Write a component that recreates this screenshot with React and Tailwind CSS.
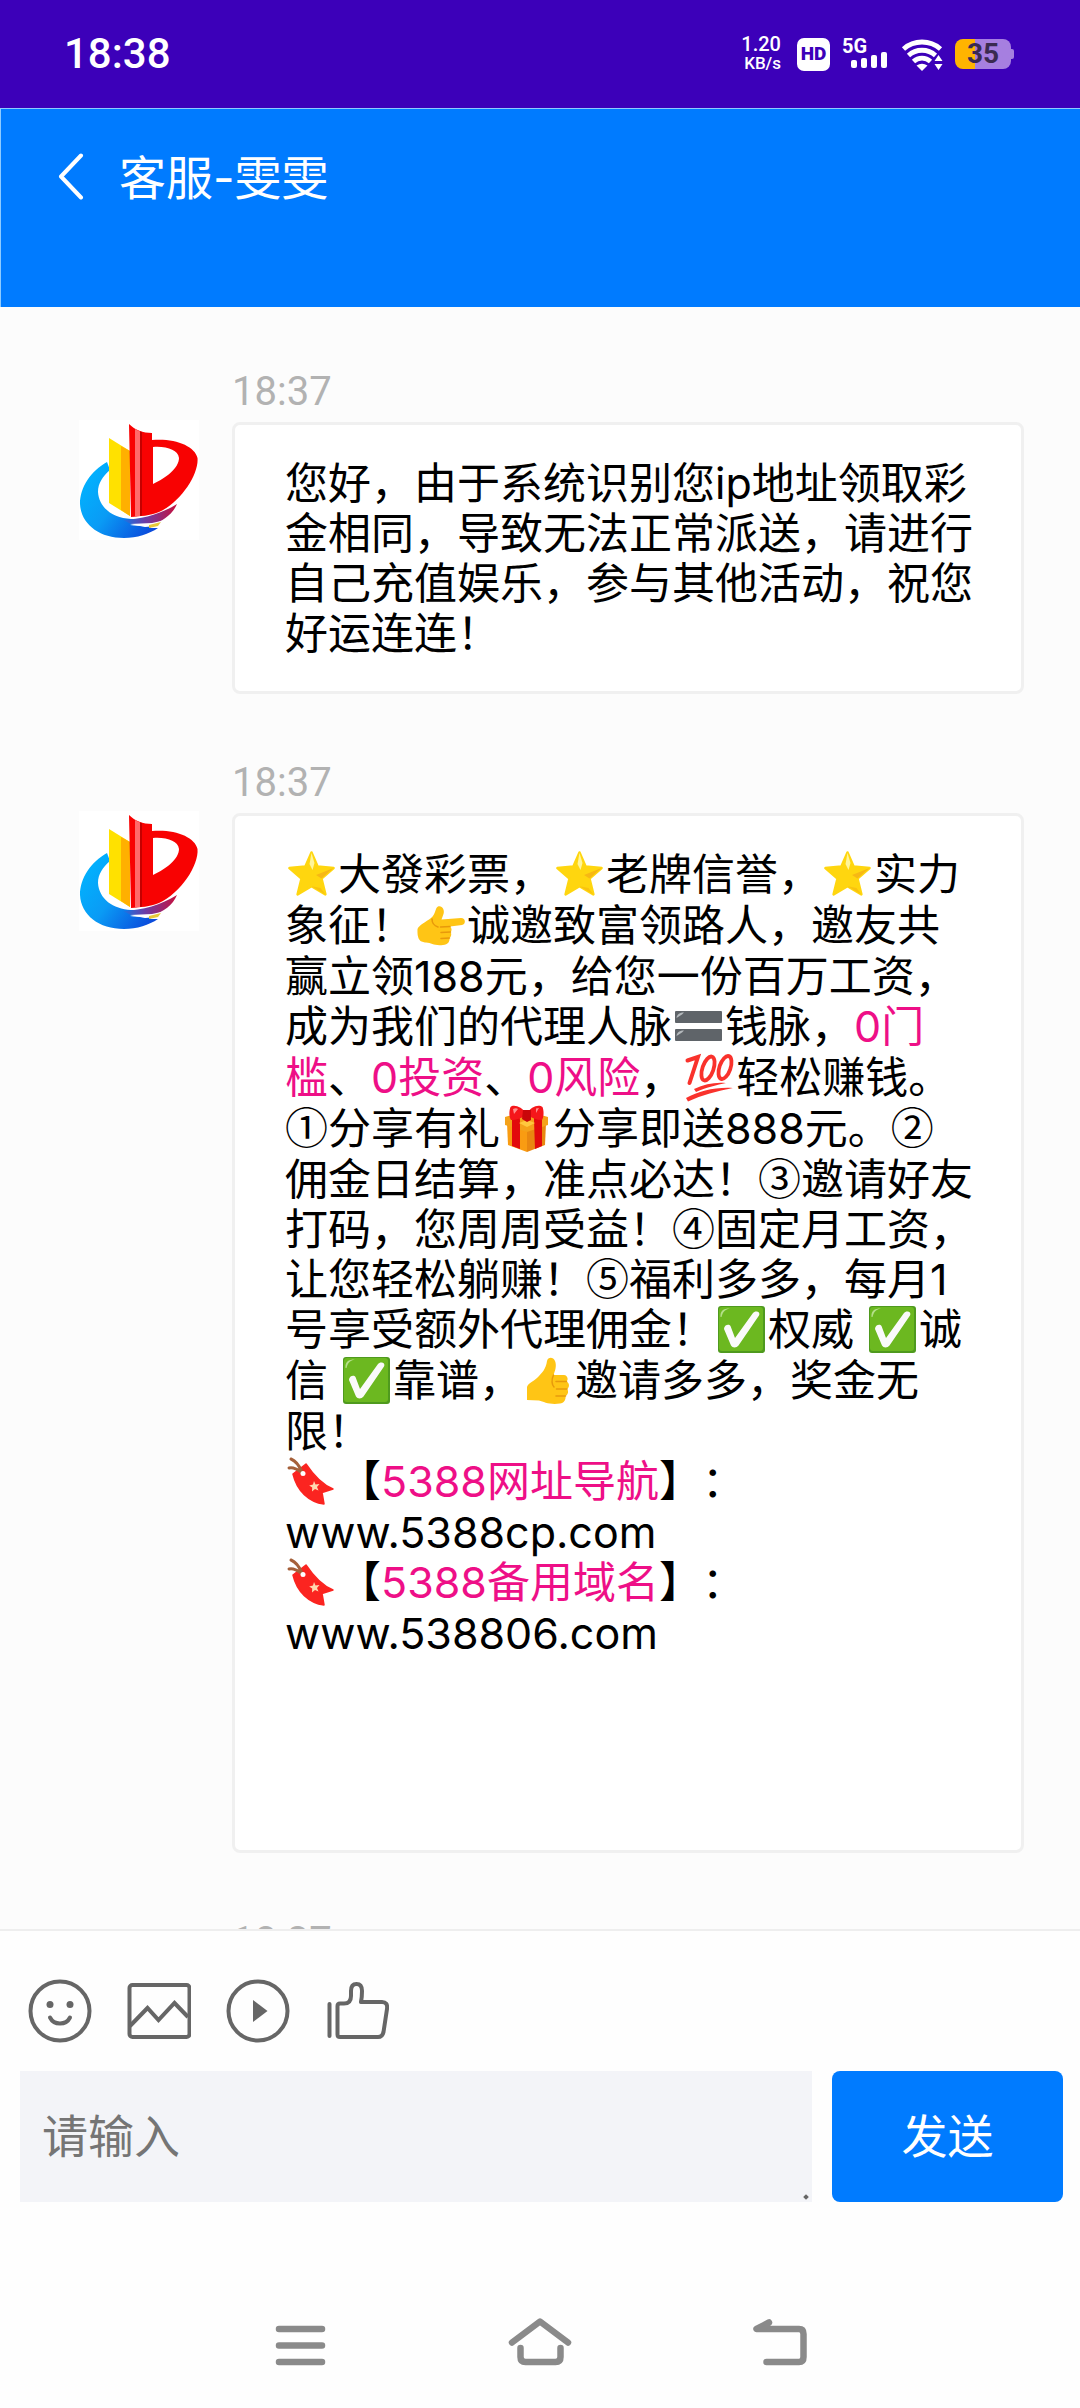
function Glyph({ label, children }) {
  return (
    <svg
      role="img"
      aria-label={label}
      viewBox="0 0 53 51"
      className="inline-block h-[51px] w-[53px] align-[-10px]"
    >
      {children}
    </svg>
  )
}

function Star() {
  return (
    <Glyph label="星">
      <path
        d="M26.5 3.5 32.6 17.6 48.6 19 36.5 29.6 40.4 45.4 26.5 37.2 12.6 45.4 16.5 29.6 4.4 19 20.4 17.6Z"
        fill="#ffd60f"
        stroke="#ffd60f"
        strokeWidth="2.5"
        strokeLinejoin="round"
      />
      <path d="M26.5 4 29.5 14 27.5 21 24.5 15Z" fill="#fff59a" />
      <path d="M48.5 19 36.5 29.6 31 26Z" fill="#f7b814" />
      <path d="M40.4 45.4 26.5 37.2 35.5 39Z" fill="#f9c20f" />
    </Glyph>
  )
}

function PointRight() {
  return (
    <Glyph label="指向">
      <path
        d="M3.5 29C5 25 12 22 17 18 22 14 21 8 24 6.5 28 5 31 10 29.5 14L27.5 19.5 47 18C52 18 52 24.5 48 25L36 26.5C38 28 38 31 36.5 32 38 34 37 37 35.5 38 36 41 34 45 29 45 20 46 18 43 12 42.5 7 42 3 41 3.5 29Z"
        fill="#ffc515"
      />
      <path d="M36 26.5 26.5 27M36.5 32 27 32.5M35.5 38 27 38.5M18 19C18 24 21 26 24 27" fill="none" stroke="#e8990b" strokeWidth="1.5" strokeLinecap="round" />
    </Glyph>
  )
}

function Equals() {
  return (
    <Glyph label="等于">
      <rect x="3" y="10" width="47" height="12" rx="1" fill="#5f6469" />
      <rect x="3" y="28" width="47" height="12" rx="1" fill="#5f6469" />
      <path d="M4.5 17C5 13 8 11.5 12 11.5L10 13.5ZM4.5 35C5 31 8 29.5 12 29.5L10 31.5Z" fill="#b5babd" />
    </Glyph>
  )
}

function Hundred() {
  return (
    <Glyph label="满分">
      <g fill="none" stroke="#f9322c" strokeLinecap="round">
        <path d="M4.5 8.5 15 5 6.5 31" strokeWidth="4" />
        <ellipse cx="25" cy="16.5" rx="5.5" ry="12.5" transform="rotate(19 25 16.5)" strokeWidth="3.8" />
        <ellipse cx="42" cy="15.5" rx="5.5" ry="12" transform="rotate(19 42 15.5)" strokeWidth="3.8" />
      </g>
      <path d="M11 37C22 32 32 30 43 31 34 33 24 35 13 40ZM3 46C16 39 32 35 50 36 34 39 19 43 5 49.5Z" fill="#f9322c" />
    </Glyph>
  )
}

function Gift() {
  return (
    <Glyph label="礼物">
      <path d="M7 20 27 26 27 49 8 42Z" fill="#f99c12" />
      <path d="M27 26 46 20 45 42 27 49Z" fill="#e98710" />
      <path d="M5 14 26.5 8 48 14 48 22 27 29 5 22Z" fill="#f4a21a" />
      <path d="M12 12 19 10 20 17 20 46 12 43ZM34 10 42 12 42 43 35 46 34 17Z" fill="#e20a0c" />
      <path d="M19 20 27 17 35 20 27 24Z" fill="#ffc83e" />
      <path
        d="M26.5 11C22 3 13 1 10.5 4 9 8 9 14 11 17 16 17 23 15 26.5 11ZM26.5 11C31 3 39 1 42.5 4 44 8 44 14 42 17 37 17 31 15 26.5 11Z"
        fill="#f5161a"
      />
      <path d="M23 7H31V17L27 19 22 16Z" fill="#c9060a" />
      <path d="M13 6C15 5 17 5 18 6L14 11ZM36 5.5 39 5 36 10Z" fill="#ff8f8c" />
    </Glyph>
  )
}

function Check() {
  return (
    <Glyph label="对勾">
      <rect x="3" y="2" width="47" height="47" rx="3" fill="#4f9a1e" />
      <rect x="4" y="3" width="44" height="44" rx="3" fill="#6cb820" />
      <path d="M5.5 13C5 7 8 4.5 15 4.5 9 6 8 8 6.5 13Z" fill="#b5e08a" />
      <path d="M9 25C9 21 14 19.5 15.5 22L20 34 38 9C40 6 46 7.5 44 11.5L23.5 41.5C21.5 44 17.5 44 16 41.5Z" fill="#fafafa" />
    </Glyph>
  )
}

function ThumbUp() {
  return (
    <Glyph label="点赞">
      <path
        d="M5 32C6 28 11 27 15 23 20 18 24 14 25 6 26 2 31 1.5 33 6 35 11 33 16 31.5 20L42 20C46 20.5 46.5 25 44.5 26.5 48 28 47.5 33 45 34 47 36 46 40 43.5 41 44 45 42 48 38 48.5 28 50 22 47 17 45.5L5 45Z"
        fill="#ffc515"
      />
      <path d="M44.5 26.5H34M45 34H34.5M43.5 41H34M31.5 20C29 25 30 30 32 32" fill="none" stroke="#e79a0c" strokeWidth="1.5" strokeLinecap="round" />
    </Glyph>
  )
}

function Tag() {
  return (
    <Glyph label="书签">
      <path d="M8 18 21 8C27 17 35 28 48 33L37 36.5 39 48C24 46 12 35 8 18Z" fill="#fb2420" stroke="#fb2420" strokeWidth="1.5" strokeLinejoin="round" />
      <path d="M6 3C11 5 14 9 17 16M4 12C8 11 12 13 16 16" fill="none" stroke="#a5603a" strokeWidth="3" strokeLinecap="round" />
      <circle cx="18" cy="17.5" r="2.5" fill="#fff" />
      <path d="m29 25 1.5 3.5 4-.5-2.5 3 1.5 3.5-3.5-1.5-3 2.5.2-4-3-2 3.8-1Z" fill="#ffd9b0" />
    </Glyph>
  )
}

function Logo() {
  return (
    <svg role="img" aria-label="大發彩票" viewBox="0 0 120 120" className="mt-[58px] size-[120px] shrink-0 bg-white">
      <defs>
        <linearGradient id="swoosh" x1="0" y1="0.2" x2="1" y2="0.9">
          <stop offset="0" stopColor="#00b4ff" />
          <stop offset="0.45" stopColor="#0a9bf5" />
          <stop offset="1" stopColor="#0b3fd8" />
        </linearGradient>
        <linearGradient id="tail" x1="0" x2="1">
          <stop offset="0" stopColor="#1676e6" />
          <stop offset="0.4" stopColor="#6a3ea8" />
          <stop offset="1" stopColor="#c8103c" />
        </linearGradient>
      </defs>
      <path
        d="M28 42C12 51 1 67 1 84 2 104 20 118 45 118 58 118 70 114 79 108L70 108 77 105C68 107 60 106 51 105L82 101 70 99 52 99C34 98 20 88 19 72 19 63 24 56 31 50Z"
        fill="url(#swoosh)"
      />
      <path d="M44 100C64 99 82 94 98 84 94 94 84 101 74 104L52 104Z" fill="url(#tail)" />
      <path d="M51 104 73 103 82 101 78 106 66 107Z" fill="#fff" />
      <path d="M70 105 82 102 79 106 70 108Z" fill="#e8c93a" />
      <path d="M30 18 51 31 51 96 30 83Z" fill="#ffe100" />
      <path d="M42 26 51 31 51 96 42 90Z" fill="#ffb000" />
      <path
        fillRule="evenodd"
        d="M50 4C56 10 64 13 73 13V20C96 18 116 26 118.5 38 120 54 102 82 80 92 71 96 61 96 52 97ZM74 27V64C87 58 100 48 100 38 99 30 88 26 74 27Z"
        fill="#f80202"
      />
      <path d="M56 9 61 11.5V96L56 96.5Z" fill="#ff6a6a" />
      <path d="M61 11.5 63 12V95.5L61 96Z" fill="#c40000" />
    </svg>
  )
}

function Message({ time, tall, children }) {
  return (
    <article className="flex items-start gap-[33px]">
      <Logo />
      <div className="min-w-0 flex-1">
        <time className="block font-['Roboto','Noto_Sans_CJK_SC',sans-serif] text-[40px] leading-[60px] text-[#b2b2b2]">
          {time}
        </time>
        <div
          className={`rounded-lg border-[3px] border-[#f0f0f0] bg-white pt-[33px] pr-[45px] pl-[50px] text-[43px] leading-[50px] text-black [text-spacing-trim:space-all] ${tall ? 'pb-[192px]' : 'pb-[33px]'}`}
        >
          {children}
        </div>
      </div>
    </article>
  )
}

function Pink({ children }) {
  return <span className="text-[#ee0f87]">{children}</span>
}

function Num({ children }) {
  return <span className="font-['Noto_Sans_CJK_SC',sans-serif] leading-none">{children}</span>
}

function StatusBar() {
  return (
    <div className="flex h-[108px] shrink-0 items-center justify-between bg-[#3c00b9] pr-[66px] pl-[64px] font-['Roboto','Noto_Sans_CJK_SC',sans-serif] text-white">
      <span className="text-[42px] leading-none font-medium">18:38</span>
      <div className="flex items-center">
        <div className="mr-4 text-right font-medium">
          <p className="text-[20px] leading-[19px]">1.20</p>
          <p className="text-[17px] leading-[19px]">KB/s</p>
        </div>
        <span className="mr-3 flex size-[33px] items-center justify-center rounded-[7px] bg-white text-[19px] font-black text-[#3c00b9]">
          HD
        </span>
        <div className="mr-[13px] h-[32px] w-[46px]">
          <p className="text-[20px] leading-[16px] font-bold">5G</p>
          <div className="-mt-[2px] flex h-[16px] items-end justify-end gap-1 pr-px">
            <span className="h-[8px] w-[6px] rounded-[2px] bg-white" />
            <span className="h-[10px] w-[6px] rounded-[2px] bg-white" />
            <span className="h-[13px] w-[6px] rounded-[2px] bg-white" />
            <span className="h-[16px] w-[6px] rounded-[2px] bg-white" />
          </div>
        </div>
        <svg viewBox="0 0 42 34" className="mr-3 h-[34px] w-[42px]">
          <g fill="none" stroke="#fff" strokeWidth="4.8">
            <path d="M2.5 12A28 28 0 0 1 39.5 12" />
            <path d="M7.5 18.5A20 20 0 0 1 34.5 18.5" />
            <path d="M12.5 24.5A12.5 12.5 0 0 1 29.5 24.5" />
          </g>
          <path d="M15.5 28.5Q21 25 26.5 28.5L21 34Z" fill="#fff" />
          <path d="M37.5 15 44 24V34H31.5V24Z" fill="#3c00b9" />
          <path d="M37.5 18 41.5 24H33.5ZM37.5 33 41.5 27H33.5Z" fill="#fff" />
        </svg>
        <div className="flex items-center">
          <div className="flex h-[30px] w-[56px] items-center justify-center rounded-lg bg-linear-to-r from-[#ffb400] from-36% to-[#a67fe0] to-36% text-[28px] font-bold text-[#3a2a50]">
            35
          </div>
          <span className="h-[10px] w-[3px] rounded-r-[2px] bg-[#a67fe0]" />
        </div>
      </div>
    </div>
  )
}

function Toolbar() {
  return (
    <div className="flex gap-[35px] px-7 text-[#666]">
      <button type="button" aria-label="表情" className="size-16">
        <svg viewBox="0 0 64 64" fill="none" stroke="currentColor" strokeWidth="4">
          <circle cx="32" cy="32" r="29.5" />
          <circle cx="22" cy="25.5" r="3.5" fill="currentColor" stroke="none" />
          <circle cx="42" cy="25.5" r="3.5" fill="currentColor" stroke="none" />
          <path d="M22 38.5C26 46.5 38 46.5 42 38.5" strokeLinecap="round" />
        </svg>
      </button>
      <button type="button" aria-label="图片" className="size-16">
        <svg viewBox="0 0 64 64" fill="none" stroke="currentColor" strokeWidth="4">
          <rect x="2.5" y="6" width="60" height="52" rx="3" />
          <path d="M3 47 20.5 29 31.5 41 47.5 24 61 38" />
        </svg>
      </button>
      <button type="button" aria-label="视频" className="size-16">
        <svg viewBox="0 0 64 64" fill="none" stroke="currentColor" strokeWidth="4">
          <circle cx="32" cy="32" r="29.5" />
          <path d="M27 21V43L41.5 32Z" fill="currentColor" stroke="none" />
        </svg>
      </button>
      <button type="button" aria-label="点赞" className="size-16">
        <svg viewBox="0 0 64 64" fill="none" stroke="currentColor" strokeWidth="4" strokeLinecap="round" strokeLinejoin="round">
          <path d="M4.5 25V57" />
          <path d="M12.5 27Q12.5 24.5 15 24.5H19Q26 24.5 26 17V12Q26 5 31.5 5T37 12Q37 18 36 23H57Q63 23 62 30L58.5 53Q57.5 58 53 58H15Q12.5 58 12.5 55.5Z" />
        </svg>
      </button>
    </div>
  )
}

function SystemNav() {
  return (
    <nav className="flex justify-center gap-[176px] text-[#8a8a8a]">
      <button type="button" aria-label="菜单" className="h-12 w-16">
        <svg viewBox="0 0 64 48" fill="none" stroke="currentColor" strokeWidth="6.5" strokeLinecap="round">
          <path d="M11 11H54M11 27.5H54M11 44H54" />
        </svg>
      </button>
      <button type="button" aria-label="主页" className="h-12 w-16">
        <svg viewBox="0 0 64 48" fill="none" stroke="currentColor" strokeWidth="6.5" strokeLinecap="round" strokeLinejoin="round">
          <path d="M4 24.5 32 3.5 60 24.5M12.5 30V39Q12.5 44 17.5 44H47.5Q52.5 44 52.5 39V30" />
        </svg>
      </button>
      <button type="button" aria-label="返回" className="h-12 w-16">
        <svg viewBox="0 0 64 48" fill="none" stroke="currentColor" strokeWidth="6.5" strokeLinecap="round" strokeLinejoin="round">
          <path d="M21 4.5 8.5 11H51Q55.5 11 55.5 16V39Q55.5 44 51 44H18.5" />
        </svg>
      </button>
    </nav>
  )
}

export default function App() {
  return (
    <div lang="zh-CN" className="flex h-screen flex-col bg-[#fefefe] font-['Inter','Noto_Sans_CJK_SC',sans-serif]">
      <StatusBar />

      <header className="flex h-[199px] shrink-0 items-start border-t border-l border-[#8ecbff] bg-[#007bff] pt-[42px] pl-[56px] text-white">
        <button type="button" aria-label="返回" className="mr-[34px] flex h-[50px] w-7 items-center">
          <svg viewBox="0 0 28 48" className="h-12 w-7" fill="none" stroke="currentColor" strokeWidth="4" strokeLinecap="round" strokeLinejoin="round">
            <path d="M24 3.5 4 24.5 24 45.5" />
          </svg>
        </button>
        <h1 className="text-[47px] leading-[54px]">客服-雯雯</h1>
      </header>

      <main className="flex min-h-0 flex-1 flex-col gap-[59px] overflow-hidden bg-[#fcfcfc] pt-[55px] pr-[56px] pl-[79px]">
        <Message time="18:37">
          您好，由于系统识别您ip地址领取彩金相同，导致无法正常派送，请进行自己充值娱乐，参与其他活动，祝您好运连连！
        </Message>
        <Message time="18:37" tall>
          <p>
            <Star />大發彩票，<Star />老牌信誉，<Star />实力
            <br />
            象征！<PointRight />诚邀致富领路人，邀友共
            <br />
            赢立领188元，给您一份百万工资，
            <br />
            成为我们的代理人脉<Equals />钱脉，<Pink>0门</Pink>
            <br />
            <Pink>槛</Pink>、<Pink>0投资</Pink>、<Pink>0风险</Pink>，<Hundred />轻松赚钱。
            <br />
            <Num>①</Num>分享有礼<Gift />分享即送888元。<Num>②</Num>
            <br />
            佣金日结算，准点必达！<Num>③</Num>邀请好友
            <br />
            打码，您周周受益！<Num>④</Num>固定月工资，
            <br />
            让您轻松躺赚！<Num>⑤</Num>福利多多，每月1
            <br />
            号享受额外代理佣金！<Check />权威 <Check />诚
            <br />
            信 <Check />靠谱，<ThumbUp />邀请多多，奖金无
            <br />
            限！
          </p>
          <p>
            <Tag />【<Pink>5388网址导航</Pink>】：
          </p>
          <p>www.5388cp.com</p>
          <p>
            <Tag />【<Pink>5388备用域名</Pink>】：
          </p>
          <p>www.538806.com</p>
        </Message>
        <Message time="18:37" />
      </main>

      <footer className="shrink-0 border-t-2 border-[#eee] bg-[#fefefe] pt-[48px] pb-[42px]">
        <Toolbar />
        <form className="mt-7 flex gap-5 pr-[17px] pl-[20px]" onSubmit={(e) => e.preventDefault()}>
          <div className="relative min-w-0 flex-1">
            <textarea
              aria-label="请输入"
              placeholder="请输入"
              rows={1}
              className="block h-[131px] w-full resize-none bg-[#f3f4f8] px-[22px] py-[38px] text-[46px] leading-[54px] placeholder:text-[#757575] focus:outline-none"
            />
            <span className="pointer-events-none absolute right-1 bottom-[3px] size-1 rotate-45 bg-[#666]" />
          </div>
          <button type="submit" className="w-[231px] rounded-lg bg-[#007bff] text-[46px] text-white">
            发送
          </button>
        </form>
        <div className="mt-[116px]">
          <SystemNav />
        </div>
      </footer>
    </div>
  )
}
